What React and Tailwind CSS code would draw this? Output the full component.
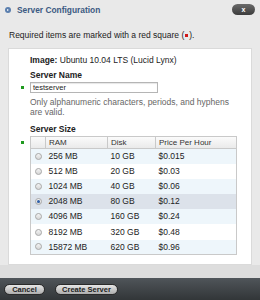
import React from 'react';

const sizes = [
  { ram: '256 MB', disk: '10 GB', price: '$0.015' },
  { ram: '512 MB', disk: '20 GB', price: '$0.03' },
  { ram: '1024 MB', disk: '40 GB', price: '$0.06' },
  { ram: '2048 MB', disk: '80 GB', price: '$0.12', selected: true },
  { ram: '4096 MB', disk: '160 GB', price: '$0.24' },
  { ram: '8192 MB', disk: '320 GB', price: '$0.48' },
  { ram: '15872 MB', disk: '620 GB', price: '$0.96' },
];

const Radio = ({ checked }) => (
  <span className="flex w-[7px] h-[7px] rounded-full border border-[#a9a9a9] bg-gradient-to-b from-[#f4f4f4] to-[#d6d6d6] items-center justify-center">
    {checked && <span className="w-[3px] h-[3px] rounded-full bg-[#2f5fa8]"></span>}
  </span>
);

const App = () => {
  return (
    <div className="w-[260px] h-[300px] bg-[#e9e9e9] flex flex-col font-['Liberation_Sans',Arial,sans-serif] text-[8.5px] text-[#222] overflow-hidden">
      <div className="h-[20px] flex items-center pl-[5px] pr-[5px]">
        <span className="w-[6px] h-[6px] rounded-full bg-[#5b7fae] flex items-center justify-center">
          <span className="w-0 h-0 border-y-[1.5px] border-y-transparent border-l-[2px] border-l-white ml-[0.5px]"></span>
        </span>
        <span className="ml-[6px] font-bold text-[8.4px] text-[#3c5a82]">Server Configuration</span>
        <span className="ml-auto mt-[-1px] w-[23px] h-[11px] rounded-full bg-gradient-to-b from-[#6a6a6a] to-[#3c3c3c] text-white text-[7px] font-bold flex items-center justify-center leading-none">x</span>
      </div>

      <div className="pl-[9px] pt-[10px] leading-[10px]">
        Required items are marked with a red square (<span className="inline-block w-[3px] h-[3px] bg-[#d01818] align-middle mx-[1px]"></span>).
      </div>

      <div className="mt-[8px] mx-[8px] h-[217px] bg-white border border-[#dadada] pl-[21px] pt-[6px]">
        <div className="leading-[10px]">
          <span className="font-bold">Image:</span> Ubuntu 10.04 LTS (Lucid Lynx)
        </div>
        <div className="mt-[5px] leading-[10px] font-bold">Server Name</div>
        <div className="mt-[2px] flex items-center -ml-[9px]">
          <span className="w-[3px] h-[3px] bg-[#1f9a1f]"></span>
          <div className="ml-[6px] w-[128px] h-[11px] border border-[#b5b5b5] bg-white pl-[2px] text-[7.5px] leading-[9px] shadow-[inset_0_1px_1px_rgba(0,0,0,0.1)]">testserver</div>
        </div>
        <div className="mt-[5px] w-[212px] leading-[9.5px] text-[#666]">
          Only alphanumeric characters, periods, and hyphens are valid.
        </div>
        <div className="mt-[7px] leading-[10px] font-bold">Server Size</div>
        <div className="mt-[2px] flex items-start -ml-[9px]">
          <span className="mt-[5px] w-[3px] h-[3px] bg-[#1f9a1f]"></span>
          <table className="ml-[6px] w-[207px] table-fixed border-collapse border border-[#c9c9c9] text-[8.5px]">
            <thead>
              <tr className="h-[12px] bg-gradient-to-b from-[#fbfbfb] to-[#e9e9e9] text-[#333]">
                <th className="w-[15px] border-r border-b border-[#c9c9c9]"></th>
                <th className="w-[62px] border-r border-b border-[#c9c9c9] font-normal text-left pl-[3px] leading-[11px] text-[8px]">RAM</th>
                <th className="w-[48px] border-r border-b border-[#c9c9c9] font-normal text-left pl-[3px] leading-[11px] text-[8px]">Disk</th>
                <th className="border-b border-[#c9c9c9] font-normal text-left pl-[3px] leading-[11px] text-[8px]">Price Per Hour</th>
              </tr>
            </thead>
            <tbody>
              {sizes.map((s, i) => (
                <tr
                  key={s.ram}
                  className={`h-[15.2px] ${s.selected ? 'bg-[#dce2ea]' : i % 2 === 0 ? 'bg-[#eef6fb]' : 'bg-white'}`}
                >
                  <td className="pl-[4px]"><Radio checked={s.selected} /></td>
                  <td className="pl-[3px]">{s.ram}</td>
                  <td className="pl-[3px]">{s.disk}</td>
                  <td className="pl-[3px]">{s.price}</td>
                </tr>
              ))}
            </tbody>
          </table>
        </div>
      </div>

      <div className="h-[13px] bg-[#dddddd]"></div>

      <div className="flex-1 bg-gradient-to-b from-[#50555a] to-[#323638] flex items-center gap-[10px] pl-[4px] pt-[1px]">
        <button className="w-[41px] h-[11px] rounded-full bg-gradient-to-b from-[#e6e6e6] to-[#adadad] border border-[#2a2a2a] text-[7.5px] font-bold text-[#222] leading-none">Cancel</button>
        <button className="w-[63px] h-[11px] rounded-full bg-gradient-to-b from-[#e6e6e6] to-[#adadad] border border-[#2a2a2a] text-[7.5px] font-bold text-[#222] leading-none">Create Server</button>
      </div>
    </div>
  );
};

export default App;
